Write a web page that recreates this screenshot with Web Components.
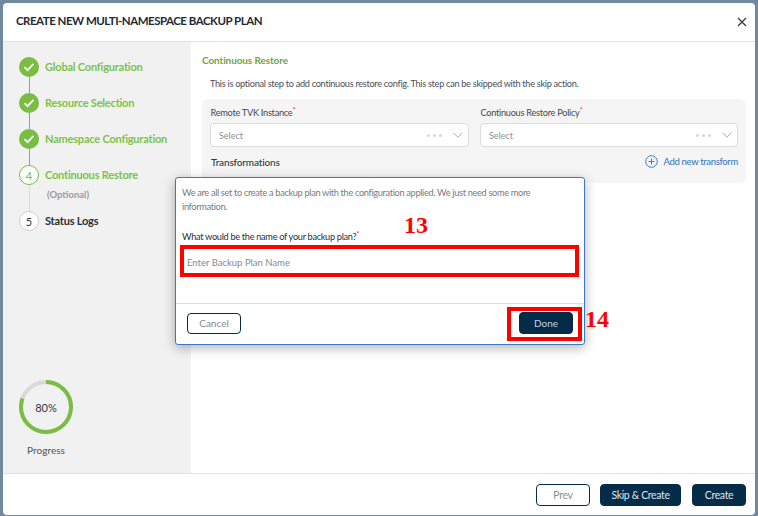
<!DOCTYPE html>
<html>
<head>
<meta charset="utf-8">
<style>
  html, body { margin: 0; height: 100%; }
  body {
    background: #6f8a9e;
    font-family: Lato, "Open Sans", sans-serif;
    overflow: hidden;
  }
</style>
</head>
<body>
<backup-modal>
  <step-item slot="steps" state="done" label="Global Configuration"></step-item>
  <step-item slot="steps" state="done" label="Resource Selection"></step-item>
  <step-item slot="steps" state="done" label="Namespace Configuration"></step-item>
  <step-item slot="steps" state="active" num="4" label="Continuous Restore" note="(Optional)"></step-item>
  <step-item slot="steps" state="todo" num="5" label="Status Logs" last></step-item>
  <restore-panel slot="content"></restore-panel>
  <plan-dialog slot="content"></plan-dialog>
</backup-modal>

<script>
class BackupModal extends HTMLElement {
  connectedCallback() {
    this.attachShadow({ mode: 'open' });
    this.shadowRoot.innerHTML = `
      <style>
        :host {
          display: flex;
          flex-direction: column;
          box-sizing: border-box;
          width: 752px;
          height: 512px;
          margin: 3px 0 0 3px;
          background: #fff;
          border-radius: 4px;
          overflow: hidden;
        }
        header {
          flex: none;
          height: 38px;
          display: flex;
          align-items: center;
          justify-content: space-between;
          padding: 0 8px 0 13px;
          border-bottom: 1px solid #dee0e3;
          font-size: 11.5px;
          letter-spacing: -0.5px;
          font-weight: 700;
          color: #1f2a37;
        }
        header span { margin-top: -3px; }
        .body { flex: 1; display: flex; min-height: 0; }
        aside {
          flex: none;
          width: 188px;
          background: #f1f1f1;
          display: flex;
          flex-direction: column;
          justify-content: space-between;
          padding: 15px 0 17px 16px;
          box-sizing: border-box;
        }
        main { flex: 1; position: relative; min-width: 0; }
        footer {
          flex: none;
          height: 41px;
          display: flex;
          align-items: center;
          justify-content: flex-end;
          gap: 10px;
          padding: 0 9px 0 0;
          border-top: 1px solid #dee0e3;
        }
        .progress { width: 54px; display: flex; flex-direction: column; align-items: center; gap: 10px; }
        .ring { position: relative; width: 54px; height: 54px; }
        .ring span {
          position: absolute; inset: 0;
          display: flex; align-items: center; justify-content: center;
          font-size: 11px; color: #33373d;
        }
        .progress > span { font-size: 10px; font-weight: 500; color: #5b6068; white-space: nowrap; }
        svg { display: block; }
        button {
          font: inherit;
          font-size: 10.5px;
          letter-spacing: -0.35px;
          height: 22px;
          padding: 0;
          border-radius: 4px;
          border: 1px solid #042c49;
          background: #042c49;
          color: #dfe5ea;
        }
        button.prev { width: 54px; background: #fff; color: #8a8f96; }
        button.skip { width: 81px; margin-right: 1px; }
        button.create { width: 54px; }
      </style>
      <header>
        <span>CREATE NEW MULTI-NAMESPACE BACKUP PLAN</span>
        <svg width="10" height="10" viewBox="0 0 10 10"><path d="M1 1l8 8M9 1l-8 8" stroke="#3c4043" stroke-width="1.4" fill="none"/></svg>
      </header>
      <div class="body">
        <aside>
          <div><slot name="steps"></slot></div>
          <div class="progress">
            <div class="ring">
              <svg width="54" height="54" viewBox="0 0 54 54">
                <circle cx="27" cy="27" r="25" fill="none" stroke="#d9d9d9" stroke-width="4"/>
                <circle cx="27" cy="27" r="25" fill="none" stroke="#79bd42" stroke-width="4"
                  stroke-dasharray="125.7 157.1" transform="rotate(-90 27 27)"/>
              </svg>
              <span>80%</span>
            </div>
            <span>Progress</span>
          </div>
        </aside>
        <main><slot name="content"></slot></main>
      </div>
      <footer>
        <button class="prev">Prev</button>
        <button class="skip">Skip &amp; Create</button>
        <button class="create">Create</button>
      </footer>
    `;
  }
}

class StepItem extends HTMLElement {
  connectedCallback() {
    const state = this.getAttribute('state');
    const note = this.getAttribute('note');
    const last = this.hasAttribute('last');
    const badge = state === 'done'
      ? `<svg width="12" height="10" viewBox="0 0 12 10"><path d="M1.5 5.2l3 3 6-6.4" stroke="#fff" stroke-width="1.7" fill="none"/></svg>`
      : this.getAttribute('num');
    this.attachShadow({ mode: 'open' });
    this.shadowRoot.innerHTML = `
      <style>
        :host { display: grid; grid-template-columns: 20px 1fr; column-gap: 6px; }
        .badge {
          box-sizing: border-box;
          width: 20px; height: 20px;
          border-radius: 50%;
          display: flex; align-items: center; justify-content: center;
          font-size: 11px;
        }
        .done { background: #79bd42; }
        .active { background: #fff; border: 1px solid #79bd42; color: #79bd42; }
        .todo { background: #fff; border: 1px solid #cfcfcf; color: #33373d; }
        .label {
          font-size: 11px; font-weight: 700; line-height: 14px; letter-spacing: -0.2px;
          color: #7dc24b; white-space: nowrap; margin-top: 3px;
        }
        :host([state=todo]) .label { color: #2b2f36; }
        .rail { display: flex; justify-content: center; height: 16px; }
        .rail i { width: 1px; background: #79bd42; }
        :host([state=active]) .rail { height: 26px; }
        :host([state=active]) .rail i { background: #dddddd; }
        .note { font-size: 9.5px; font-weight: 700; color: #9b9b9b; padding: 4px 0 0 2px; }
      </style>
      <div class="badge ${state}">${badge}</div>
      <div class="label">${this.getAttribute('label')}</div>
      ${last ? '' : `<div class="rail"><i></i></div><div class="note">${note || ''}</div>`}
    `;
  }
}

class RestorePanel extends HTMLElement {
  connectedCallback() {
    this.attachShadow({ mode: 'open' });
    this.shadowRoot.innerHTML = `
      <style>
        :host { display: block; padding: 11px 9px 0 11px; }
        h3 { margin: 0; font-size: 10px; line-height: 14px; letter-spacing: -0.1px; font-weight: 700; color: #6fa344; }
        p { margin: 10px 0 0 8px; font-size: 9.2px; letter-spacing: -0.3px; line-height: 14px; color: #4a4f57; }
        .card {
          margin-top: 8px;
          height: 84px;
          box-sizing: border-box;
          background: #f5f5f5;
          border-radius: 6px;
          padding: 7px 8px 0 8px;
        }
        .grid { display: grid; grid-template-columns: 259px 258px; column-gap: 11px; }
        label { display: block; padding-left: .5px; font-size: 9.2px; letter-spacing: -0.27px; line-height: 14px; color: #44494f; }
        label b { color: #e5455c; font-weight: 400; font-size: 8px; vertical-align: 3px; line-height: 0; }
        .select {
          margin-top: 3px;
          box-sizing: border-box;
          height: 24px;
          background: #fff;
          border: 1px solid #dcdcdc;
          border-radius: 4px;
          display: flex; align-items: center; justify-content: space-between;
          padding: 0 5px 0 8px;
          font-size: 9px;
          color: #8c9096;
        }
        .tools { display: flex; align-items: center; gap: 11px; }
        .dots { display: flex; gap: 3px; }
        .dots i { width: 3px; height: 3px; border-radius: 50%; background: #d8d8d8; }
        .row { display: flex; justify-content: space-between; align-items: center; margin-top: 8px; padding-left: 1px; }
        .row span { font-size: 10px; letter-spacing: -0.16px; font-weight: 500; color: #33373d; }
        .add { display: flex; align-items: center; gap: 6px; font-size: 9.5px; letter-spacing: -0.35px; font-weight: 500; color: #3a7cc4; }
        svg { display: block; }
      </style>
      <h3>Continuous Restore</h3>
      <p>This is optional step to add continuous restore config. This step can be skipped with the skip action.</p>
      <div class="card">
        <div class="grid">
          <div>
            <label>Remote TVK Instance<b>*</b></label>
            <div class="select">Select<div class="tools"><div class="dots"><i></i><i></i><i></i></div><svg width="10" height="6" viewBox="0 0 10 6"><path d="M.5.7L5 5.2 9.5.7" stroke="#a8acb1" fill="none"/></svg></div></div>
          </div>
          <div>
            <label>Continuous Restore Policy<b>*</b></label>
            <div class="select">Select<div class="tools"><div class="dots"><i></i><i></i><i></i></div><svg width="10" height="6" viewBox="0 0 10 6"><path d="M.5.7L5 5.2 9.5.7" stroke="#a8acb1" fill="none"/></svg></div></div>
          </div>
        </div>
        <div class="row">
          <span>Transformations</span>
          <div class="add">
            <svg width="13" height="13" viewBox="0 0 13 13"><circle cx="6.5" cy="6.5" r="5.8" fill="none" stroke="#3a7cc4"/><path d="M6.5 3.5v6M3.5 6.5h6" stroke="#3a7cc4"/></svg>
            Add new transform
          </div>
        </div>
      </div>
    `;
  }
}

class PlanDialog extends HTMLElement {
  connectedCallback() {
    this.attachShadow({ mode: 'open' });
    this.shadowRoot.innerHTML = `
      <style>
        :host {
          position: absolute;
          left: -16px; top: 135px;
          width: 410px; height: 168px;
          box-sizing: border-box;
          background: #fff;
          border: 1px solid #3a78c0;
          border-radius: 3px;
          box-shadow: 0 3px 12px rgba(0,0,0,.3);
          display: flex; flex-direction: column;
        }
        .top { flex: 1; position: relative; padding: 8px 5px 0 6px; }
        p { margin: 0; max-width: 360px; font-size: 9.2px; letter-spacing: -0.32px; line-height: 14px; color: #777b82; }
        label { display: block; margin-top: 16px; font-size: 9.2px; letter-spacing: -0.3px; line-height: 13px; font-weight: 400; color: #2c3036; }
        label b { color: #e5455c; font-weight: 400; font-size: 8px; vertical-align: 3px; line-height: 0; }
        .input {
          margin: 2px 0 0 -2px;
          box-sizing: border-box;
          width: 399px; height: 32px;
          border: 4px solid #ff0000;
          display: flex; align-items: center;
          padding: 3px 0 0 3px;
          font-size: 9.5px;
          color: #85898f;
        }
        .num {
          position: absolute;
          font-family: "Liberation Serif", serif;
          font-weight: 700; font-size: 24px; line-height: 24px;
          color: #ff0000;
        }
        .n13 { left: 228px; top: 35px; }
        .n14 { left: 409px; top: 129px; z-index: 2; }
        footer {
          flex: none; height: 40px;
          border-top: 1px solid #dedede;
          display: flex; align-items: center; justify-content: space-between;
          padding: 0 2px 0 11px;
        }
        button {
          font: inherit; font-size: 10px; height: 22px; padding: 0; border-radius: 4px;
          border: 1px solid #042c49;
        }
        .cancel { width: 54px; height: 21px; margin-bottom: 2px; background: #fff; color: #85898f; }
        .ring { box-sizing: border-box; width: 75px; height: 34px; border: 4px solid #ff0000; padding: 1px 0 0 8px; }
        .done { display: block; width: 54px; background: #042c49; color: #c9d3da; }
      </style>
      <div class="top">
        <p>We are all set to create a backup plan with the configuration applied. We just need some more information.</p>
        <label>What would be the name of your backup plan?<b>*</b></label>
        <div class="input">Enter Backup Plan Name</div>
        <span class="num n13">13</span>
      </div>
      <footer>
        <button class="cancel">Cancel</button>
        <div class="ring"><button class="done">Done</button></div>
      </footer>
      <span class="num n14">14</span>
    `;
  }
}

customElements.define('backup-modal', BackupModal);
customElements.define('step-item', StepItem);
customElements.define('restore-panel', RestorePanel);
customElements.define('plan-dialog', PlanDialog);
</script>
</body>
</html>
